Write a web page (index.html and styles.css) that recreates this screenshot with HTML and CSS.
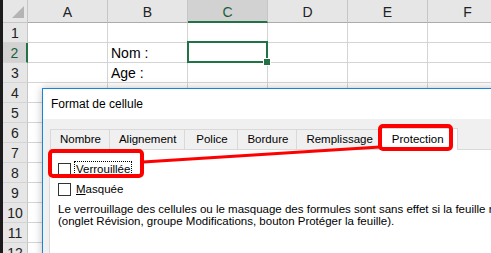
FILE: index.html
```html
<!DOCTYPE html>
<html lang="fr">
<head>
    <meta charset="UTF-8">
    <title>Format de cellule</title>
    <link rel="stylesheet" href="styles.css">
</head>
<body>
    <div class="excel">
        <div class="edge"></div>
        <div class="grid">
            <div class="corner"><span class="tri"></span></div>
            <div class="colhead">A</div>
            <div class="colhead">B</div>
            <div class="colhead sel">C</div>
            <div class="colhead">D</div>
            <div class="colhead">E</div>
            <div class="colhead">F</div>

            <div class="rowhead">1</div>
            <div class="cell"></div><div class="cell"></div><div class="cell"></div><div class="cell"></div><div class="cell"></div><div class="cell"></div>

            <div class="rowhead sel">2</div>
            <div class="cell"></div><div class="cell">Nom :</div><div class="cell active"></div><div class="cell"></div><div class="cell"></div><div class="cell"></div>

            <div class="rowhead">3</div>
            <div class="cell"></div><div class="cell">Age :</div><div class="cell"></div><div class="cell"></div><div class="cell"></div><div class="cell"></div>

            <div class="rowhead">4</div>
            <div class="cell"></div><div class="cell"></div><div class="cell"></div><div class="cell"></div><div class="cell"></div><div class="cell"></div>
            <div class="rowhead">5</div>
            <div class="cell"></div><div class="cell"></div><div class="cell"></div><div class="cell"></div><div class="cell"></div><div class="cell"></div>
            <div class="rowhead">6</div>
            <div class="cell"></div><div class="cell"></div><div class="cell"></div><div class="cell"></div><div class="cell"></div><div class="cell"></div>
            <div class="rowhead">7</div>
            <div class="cell"></div><div class="cell"></div><div class="cell"></div><div class="cell"></div><div class="cell"></div><div class="cell"></div>
            <div class="rowhead">8</div>
            <div class="cell"></div><div class="cell"></div><div class="cell"></div><div class="cell"></div><div class="cell"></div><div class="cell"></div>
            <div class="rowhead">9</div>
            <div class="cell"></div><div class="cell"></div><div class="cell"></div><div class="cell"></div><div class="cell"></div><div class="cell"></div>
            <div class="rowhead">10</div>
            <div class="cell"></div><div class="cell"></div><div class="cell"></div><div class="cell"></div><div class="cell"></div><div class="cell"></div>
            <div class="rowhead">11</div>
            <div class="cell"></div><div class="cell"></div><div class="cell"></div><div class="cell"></div><div class="cell"></div><div class="cell"></div>
            <div class="rowhead">12</div>
            <div class="cell"></div><div class="cell"></div><div class="cell"></div><div class="cell"></div><div class="cell"></div><div class="cell"></div>
        </div>
    </div>

    <div class="dialog">
        <div class="dialog-title">Format de cellule</div>
        <div class="dialog-body">
            <div class="tabs">
                <span class="tab">Nombre</span>
                <span class="tab">Alignement</span>
                <span class="tab">Police</span>
                <span class="tab">Bordure</span>
                <span class="tab">Remplissage</span>
                <span class="tab active">Protection</span>
            </div>
            <div class="panel">
                <div class="check">
                    <span class="box"></span>
                    <span class="label focus"><u>V</u>errouillée</span>
                </div>
                <div class="check">
                    <span class="box"></span>
                    <span class="label"><u>M</u>asquée</span>
                </div>
                <p class="note">Le verrouillage des cellules ou le masquage des formules sont sans effet si la feuille n'est pas protégée<br>(onglet Révision, groupe Modifications, bouton Protéger la feuille).</p>
            </div>
        </div>
    </div>

    <!-- annotations drawn on top of the screenshot -->
    <svg class="marks" width="491" height="253" viewBox="0 0 491 253">
        <rect x="50" y="151" width="92" height="25" rx="3" fill="none" stroke="#ff0000" stroke-width="4"/>
        <rect x="380" y="126" width="71" height="23" rx="3" fill="none" stroke="#ff0000" stroke-width="4"/>
        <line x1="143" y1="162" x2="380" y2="147" stroke="#ff0000" stroke-width="3"/>
    </svg>
</body>
</html>
```

FILE: styles.css
```css
* {
    margin: 0;
    padding: 0;
    box-sizing: border-box;
}

body {
    width: 491px;
    height: 253px;
    overflow: hidden;
    background-color: #fff;
    position: relative;
    font-family: 'Liberation Sans', Arial, sans-serif;
}

.excel {
    display: flex;
}

.edge {
    flex-shrink: 0;
    width: 3px;
    background-color: #1c1c1c;
}

.grid {
    flex-shrink: 0;
    display: grid;
    grid-template-columns: 25px repeat(6, 80px);
    grid-template-rows: 23px repeat(12, 20px);
}

.corner,
.colhead,
.rowhead {
    background-color: #e6e6e6;
    color: #222;
    font-size: 14px;
    display: flex;
    align-items: center;
    justify-content: center;
}

.corner {
    position: relative;
    border-right: 1px solid #c6c6c6;
    border-bottom: 1px solid #c6c6c6;
}

.tri {
    position: absolute;
    right: 3px;
    bottom: 4px;
    width: 0;
    height: 0;
    border-left: 12px solid transparent;
    border-bottom: 12px solid #b4b4b4;
}

.colhead {
    border-right: 1px solid #c6c6c6;
    border-bottom: 1px solid #ababab;
    padding-top: 2px;
}

.colhead.sel {
    background-color: #d2d2d2;
    color: #1d5d3a;
    border-bottom: 2px solid #217346;
}

.rowhead {
    border-right: 1px solid #c6c6c6;
    border-bottom: 1px solid #d4d4d4;
    padding-top: 1px;
}

.rowhead.sel {
    background-color: #d2d2d2;
    color: #1d5d3a;
    border-right: 2px solid #217346;
}

.cell {
    border-right: 1px solid #d4d4d4;
    border-bottom: 1px solid #d4d4d4;
    font-size: 14px;
    color: #000;
    padding: 2px 0 0 3px;
    line-height: 17px;
}

.cell.active {
    position: relative;
}

.cell.active::before {
    content: "";
    position: absolute;
    left: -1px;
    top: -2px;
    right: -1px;
    bottom: -1px;
    border: 2px solid #217346;
}

.cell.active::after {
    content: "";
    position: absolute;
    right: -4px;
    bottom: -4px;
    width: 6px;
    height: 6px;
    background-color: #217346;
    border: 1px solid #fff;
}

/* dialog window */
.dialog {
    position: absolute;
    left: 42px;
    top: 88px;
    width: 520px;
    height: 220px;
    border: 1px solid #1883d7;
    background-color: #f0f0f0;
    box-shadow: 0 0 8px rgba(0, 0, 0, 0.25);
}

.dialog-title {
    background-color: #fff;
    height: 30px;
    padding: 8px 0 0 8px;
    font-size: 12px;
    color: #000;
}

.dialog-body {
    padding: 8px 0 0 6px;
    font-family: 'Liberation Sans', Tahoma, sans-serif;
    font-size: 11.5px;
    color: #000;
}

.tabs {
    display: flex;
    align-items: flex-end;
    height: 22px;
    padding-left: 1px;
}

.tab {
    height: 20px;
    min-width: 53px;
    padding: 3px 8px 0 9px;
    text-align: center;
    background-color: #f0f0f0;
    border: 1px solid #d9d9d9;
    border-bottom: none;
    border-right: none;
    white-space: nowrap;
}

.tab.active {
    height: 22px;
    background-color: #fff;
    border-right: 1px solid #d9d9d9;
    margin-left: -1px;
    margin-bottom: -1px;
    padding: 4px 13px 0 11px;
    position: relative;
}

.panel {
    background-color: #fff;
    border: 1px solid #d9d9d9;
    height: 200px;
    padding: 9px 0 0 8px;
}

.check {
    display: flex;
    align-items: center;
    height: 20px;
    gap: 4px;
}

.box {
    width: 13px;
    height: 13px;
    border: 1px solid #333;
    background-color: #fff;
}

.label {
    padding: 1px 1px;
}

.focus {
    outline: 1px dotted #000;
}

.note {
    margin-top: 4px;
    line-height: 12px;
    white-space: nowrap;
}

.marks {
    position: absolute;
    left: 0;
    top: 0;
}
```
